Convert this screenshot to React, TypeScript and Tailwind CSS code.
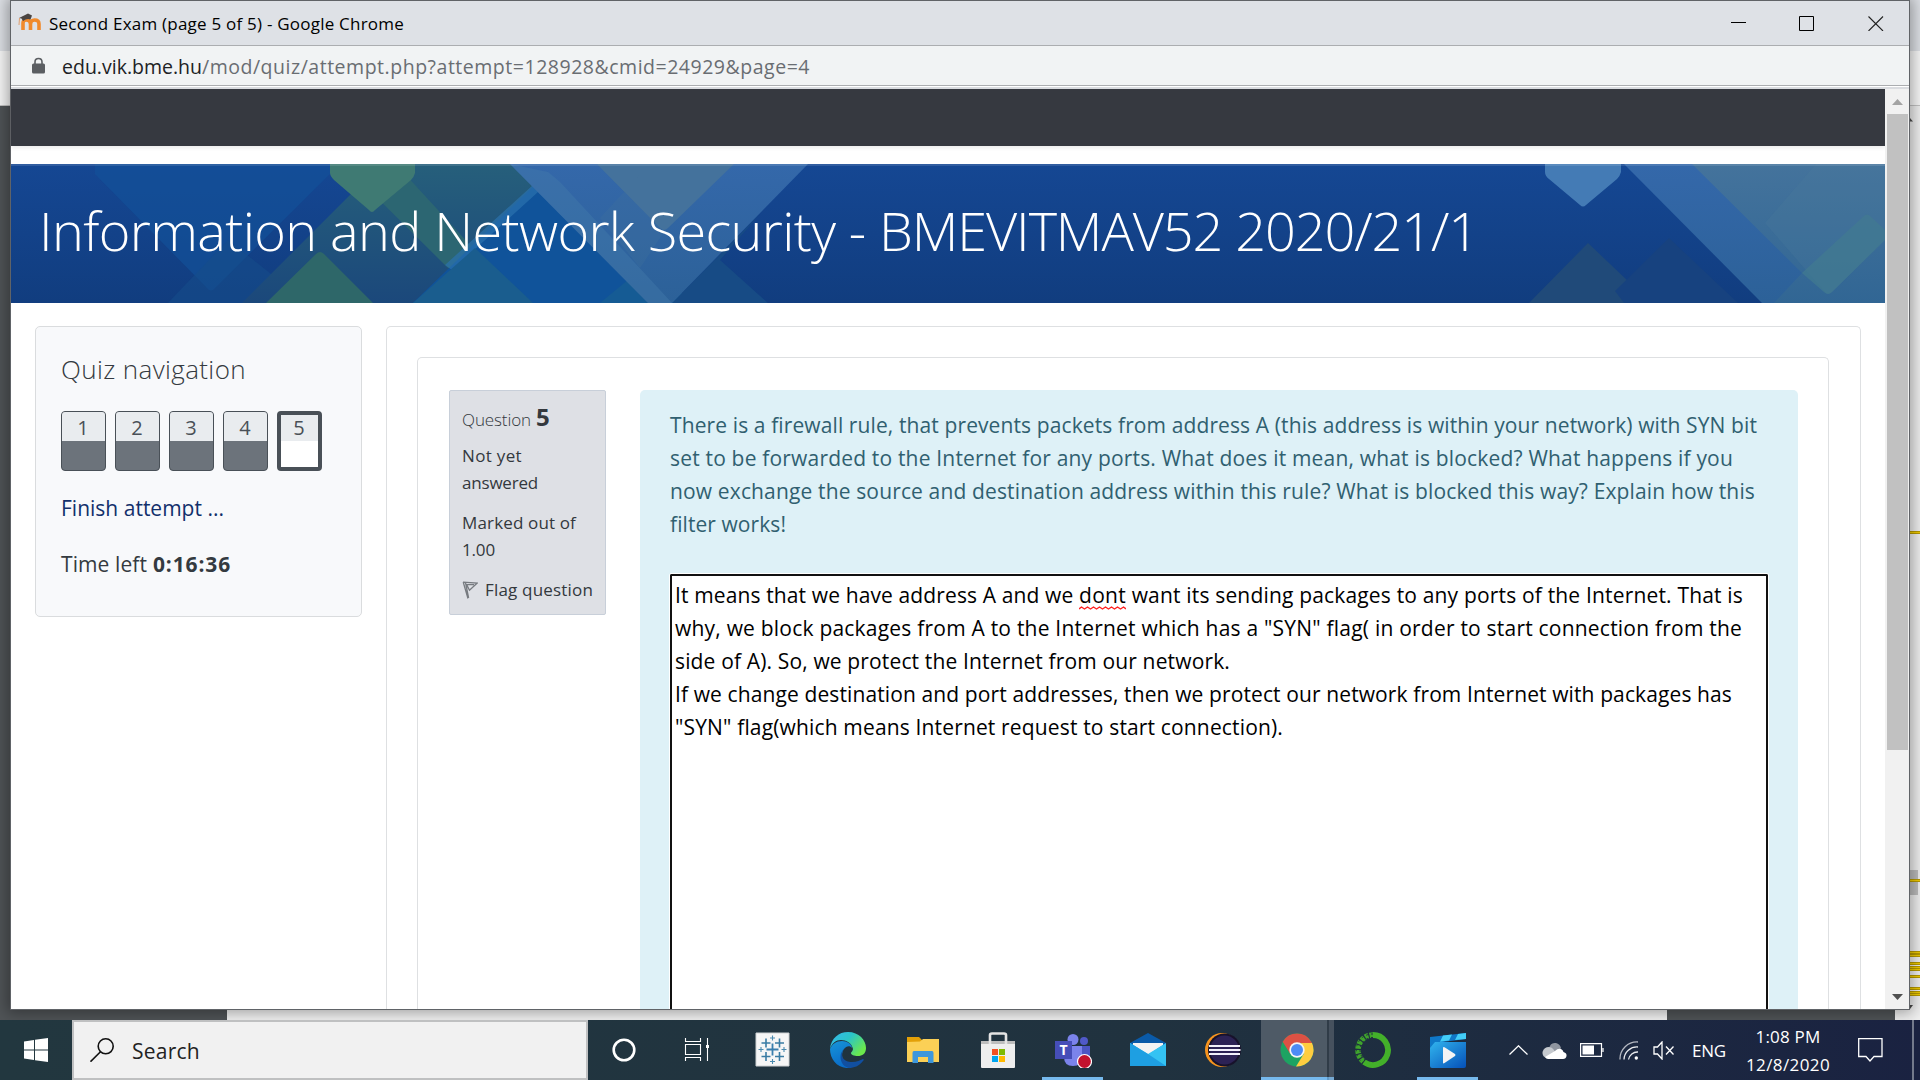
import { useLayoutEffect, useRef } from "react";
import type { ReactNode } from "react";

/** Single line of text whose tracking is adjusted so that it spans `w` pixels. */
function Fit({ w, className = "", children }: { w: number; className?: string; children: ReactNode }) {
  const ref = useRef<HTMLSpanElement>(null);
  useLayoutEffect(() => {
    const el = ref.current;
    if (!el) return;
    el.style.letterSpacing = "0px";
    const n = (el.textContent || "").length;
    el.style.letterSpacing = `${(w - el.getBoundingClientRect().width) / n}px`;
  }, [w]);
  return (
    <span ref={ref} className={`inline-block whitespace-nowrap ${className}`}>
      {children}
    </span>
  );
}

const questionLines: [string, number][] = [
  ["There is a firewall rule, that prevents packets from address A (this address is within your network) with SYN bit", 1087],
  ["set to be forwarded to the Internet for any ports. What does it mean, what is blocked? What happens if you", 1063],
  ["now exchange the source and destination address within this rule? What is blocked this way? Explain how this", 1085],
  ["filter works!", 116],
];

function Banner() {
  return (
    <div className="grid h-[139px] shrink-0 items-center">
      <svg className="col-start-1 row-start-1 h-[139px] w-[1874px]" viewBox="11 164 1874 139" preserveAspectRatio="none">
        <defs>
          <linearGradient id="base" x1="0" y1="0" x2="0" y2="1">
            <stop offset="0" stopColor="#154793" />
            <stop offset="1" stopColor="#113d7f" />
          </linearGradient>
          <linearGradient id="teal" x1="0" y1="0" x2="0" y2="1">
            <stop offset="0" stopColor="#265f7b" />
            <stop offset="1" stopColor="#1b487b" />
          </linearGradient>
          <linearGradient id="light" x1="0" y1="0" x2="0" y2="1">
            <stop offset="0" stopColor="#3468aa" />
            <stop offset="1" stopColor="#2c6198" />
          </linearGradient>
          <linearGradient id="slate" x1="0" y1="0" x2="0" y2="1">
            <stop offset="0" stopColor="#44739c" />
            <stop offset="1" stopColor="#316694" />
          </linearGradient>
        </defs>
        <rect x="11" y="164" width="1874" height="139" fill="url(#base)" />
        <path d="M95 164L95 174L207 288Q211 293 215 288L334 170V164Z" fill="#13529a" opacity=".65" />
        <path d="M168 303L228 240L308 303Z" fill="#164d8a" opacity=".6" />
        <path d="M242 303L352 193L380 164H530L548 172L430 303Z" fill="url(#teal)" />
        <path d="M266 303L316 254Q320 250 324 254L373 303Z" fill="#2e6769" />
        <path d="M343 164H398L404 173L471 246L453 267Q450 270 447 267Z" fill="#2c6672" />
        <path d="M330 164H415V173Q414 177 411 180L375 210Q372 214 369 210L334 180Q330 176 330 173Z" fill="#3f7a73" />
        <path d="M413 303L548 172L680 303Z" fill="#10539a" />
        <path d="M445 265L545 174L552 174L560 184L549 182L452 270Z" fill="#2b72ae" opacity=".7" />
        <path d="M413 303L475 248L533 303Z" fill="#1a5d8e" />
        <path d="M600 303L640 270L700 303Z" fill="#155b94" />
        <path d="M672 303L760 214L720 260L768 303Z" fill="#174b85" />
        <path d="M510 164H808L672 303H648Z" fill="url(#light)" />
        <path d="M548 172L560 182L672 303H648L510 164Z" fill="#4279aa" opacity=".45" />
        <path d="M597 164H734L668 228Q664 232 660 228Z" fill="#44729c" />
        <path d="M650 164L600 218L640 268L664 232L597 164Z" fill="#44729c" opacity=".25" />
        <path d="M1545 164H1621V172Q1620 176 1617 179L1586 205Q1583 208 1580 205L1549 179Q1545 176 1545 172Z" fill="#447bb5" />
        <path d="M1529 303L1588 243L1651 303Z" fill="#204a79" />
        <path d="M1615 291L1669 238L1738 303H1624Z" fill="#17427f" />
        <path d="M1624 164H1885V303H1762Z" fill="url(#light)" />
        <path d="M1692 164H1885V303H1774L1802 273Z" fill="url(#slate)" />
        <path d="M1816 164L1765 223L1825 292Q1828 296 1832 292L1885 240V164Z" fill="#4a7a9c" opacity=".25" />
        <path d="M1802 273L1864 216Q1867 213 1870 216L1885 230V240L1832 292Q1828 296 1824 292Z" fill="#427b90" opacity=".7" />
        <rect x="11" y="164" width="1874" height="2" fill="#ffffff" opacity=".12" />
      </svg>
      <h1 className="col-start-1 row-start-1 flex pb-[8px] pl-[28px] text-[54px] leading-[76px] font-light text-white">
        <Fit w={840}>Information and Network Security -&nbsp;</Fit>
        <Fit w={599}>BMEVITMAV52 2020/21/1</Fit>
      </h1>
    </div>
  );
}

function QuizNav() {
  return (
    <aside className="h-[291px] w-[327px] shrink-0 rounded-[5px] border border-[#dadcde] bg-[#f8f9fb] pt-6 pl-[25px] text-[21px] leading-[33px] text-[#343a40]">
      <h2 className="h-9 text-[26px] leading-9 font-light"><Fit w={185}>Quiz navigation</Fit></h2>
      <div className="mt-6 flex gap-[9px] text-xl text-[#495057]">
        {[1, 2, 3, 4].map((n) => (
          <div key={n} className="flex h-[60px] w-[45px] flex-col overflow-hidden rounded-[4px] border border-[#495057] bg-[#6c737b]">
            <span className="h-[29px] bg-[#e9ecef] pr-px text-center leading-[31px]">{n}</span>
          </div>
        ))}
        <div className="flex h-[60px] w-[45px] flex-col overflow-hidden rounded-[4px] border-4 border-[#495057] bg-white">
          <span className="h-[26px] bg-[#e9ecef] pr-px text-center leading-[25px]">5</span>
        </div>
      </div>
      <p className="mt-[21px] text-[#12306b]"><Fit w={163}>Finish attempt ...</Fit></p>
      <p className="mt-[23px] flex gap-[6px]">
        <Fit w={86}>Time left</Fit>
        <Fit w={78} className="font-bold">0:16:36</Fit>
      </p>
    </aside>
  );
}

function QuestionInfo() {
  return (
    <div className="h-[225px] w-[157px] shrink-0 rounded-[2px] border border-[#c8cfd9] bg-[#dee0e5] pt-3 pl-3 text-[17px] leading-[27px] text-[#33383d]">
      <div className="flex h-[27px] items-baseline gap-[5px]">
        <Fit w={69} className="font-light">Question</Fit>
        <span className="text-[24px] leading-[27px] font-bold">5</span>
      </div>
      <div className="mt-3 flex flex-col items-start"><Fit w={60}>Not yet</Fit><Fit w={76}>answered</Fit></div>
      <div className="mt-[13px] flex flex-col items-start"><Fit w={114}>Marked out of</Fit><Fit w={33}>1.00</Fit></div>
      <div className="mt-[13px] flex items-center gap-[7px]">
        <svg className="h-[18px] w-4" viewBox="0 0 16 18" fill="none" stroke="#777b80" strokeWidth="1.3">
          <path d="M1.2 1L6 17.5M3.4 1L6.6 17M1 1.2L15 2.2L7.5 9.2L4.6 3.6L12 3.6" />
        </svg>
        <Fit w={108}>Flag question</Fit>
      </div>
    </div>
  );
}

function Answer() {
  return (
    <div className="mt-[32px] ml-[-1px] flex grow rounded-t-[3px] border-x border-t border-white bg-white">
      <div className="flex grow flex-col items-start rounded-t-[2px] border-x-2 border-t-2 border-[#111111] pt-[3px] pl-[3px] text-black">
        <div className="flex">
          <Fit w={404}>It means that we have address A and we&nbsp;</Fit>
          <span className="relative">
            <Fit w={47}>dont</Fit>
            <svg className="absolute top-[27px] left-0 h-1 w-[47px]" viewBox="0 0 47 4" fill="none" stroke="#ff2020" strokeWidth="1.4">
              <path d="M0 3L2.5 1L5.5 3L8.5 1L11.5 3L14.5 1L17.5 3L20.5 1L23.5 3L26.5 1L29.5 3L32.5 1L35.5 3L38.5 1L41.5 3L44.5 1L47 3" />
            </svg>
          </span>
          <Fit w={617}>&nbsp;want its sending packages to any ports of the Internet. That is</Fit>
        </div>
        <Fit w={1067}>why, we block packages from A to the Internet which has a "SYN" flag( in order to start connection from the</Fit>
        <Fit w={555}>side of A). So, we protect the Internet from our network.</Fit>
        <Fit w={1057}>If we change destination and port addresses, then we protect our network from Internet with packages has</Fit>
        <Fit w={608}>"SYN" flag(which means Internet request to start connection).</Fit>
      </div>
    </div>
  );
}

function ScrollBar() {
  return (
    <div className="flex w-6 flex-col items-center bg-[#f1f1f1]">
      <svg className="h-[25px] w-6 shrink-0" viewBox="0 0 24 25"><path d="M7 16L12.5 10L18 16Z" fill="#a3a3a3" /></svg>
      <div className="h-[636px] w-[21px] shrink-0 bg-[#c1c1c1]" />
      <div className="grow" />
      <svg className="h-[22px] w-6 shrink-0" viewBox="0 0 24 22"><path d="M7 7L18 7L12.5 13Z" fill="#505050" /></svg>
    </div>
  );
}

function ExamWindow() {
  return (
    <section className="absolute top-0 left-[10px] flex h-[1010px] w-[1900px] flex-col border border-[#606367] bg-white shadow-[0_0_14px_3px_rgba(0,0,0,0.35)]">
      <header className="flex h-11 shrink-0 items-center bg-[#dee1e6] pl-[7px] text-black">
        <svg className="h-[22px] w-6" viewBox="0 0 24 22" fill="none">
          <path d="M5 18V11Q5 8 8.2 8Q12.5 8 12.5 12V18M12.5 12Q12.5 8 16.5 8Q21 8 21 12V18" stroke="#f08a2c" strokeWidth="3.6" />
          <path d="M1 6L10 1.5L14 3.5L12.5 7.5Q9 6 5 9L3.5 6.5Z" fill="#4a4542" />
          <path d="M1.5 6L1 13" stroke="#e0a070" />
        </svg>
        <Fit w={355} className="mt-[2px] ml-[7px] text-[17px]">Second Exam (page 5 of 5) - Google Chrome</Fit>
        <div className="ml-auto flex pr-[25px]">
          <svg className="mr-[52px] h-4 w-4" viewBox="0 0 16 16"><path d="M0 7.5H15" stroke="#000" /></svg>
          <svg className="mr-[53px] h-4 w-4" viewBox="0 0 16 16"><path d="M.5 1.5H14.5V15.5H.5Z" stroke="#000" fill="none" /></svg>
          <svg className="h-4 w-4" viewBox="0 0 16 16"><path d="M.5 1.5L15 16M15 1.5L.5 16" stroke="#222" strokeWidth="1.1" /></svg>
        </div>
      </header>
      <div className="flex h-[41px] shrink-0 items-center border-y border-[#abadb0] bg-[#f1f3f4] pl-[21px] text-[19.5px] text-[#696d72]">
        <svg className="h-[17px] w-[13px]" viewBox="0 0 13 17" fill="none">
          <path d="M3 8V5Q3 1.5 6.5 1.5Q10 1.5 10 5V8" stroke="#5b5e62" strokeWidth="1.6" />
          <rect y="6.5" width="13" height="10" rx="1.5" fill="#5b5e62" />
        </svg>
        <Fit w={140} className="mt-[2px] ml-[17px] text-[#202124]">edu.vik.bme.hu</Fit>
        <Fit w={608} className="mt-[2px]">/mod/quiz/attempt.php?attempt=128928&amp;cmid=24929&amp;page=4</Fit>
      </div>
      <div className="h-[3px] shrink-0 border-t border-white bg-[#dadce0]" />
      <div className="flex min-h-0 grow">
        <main className="flex w-[1874px] flex-col">
          <div className="h-[57px] shrink-0 bg-[#363940] shadow-[0_2px_4px_rgba(0,0,0,0.08)]" />
          <div className="h-[18px] shrink-0" />
          <Banner />
          <div className="flex min-h-0 grow gap-6 overflow-hidden pt-[23px] pl-6">
            <QuizNav />
            <div className="flex w-[1475px] rounded-t-[5px] border-x border-t border-[#dee0e2] px-[30px] pt-[30px]">
              <div className="flex w-[1412px] gap-[34px] rounded-t-[5px] border-x border-t border-[#dee0e2] pt-8 pl-[31px]">
                <QuestionInfo />
                <article className="flex w-[1158px] flex-col rounded-t-[5px] bg-[#def1f7] pt-[19px] pr-[29px] pl-[30px] text-[21px] leading-[33px] text-[#306070]">
                  <div className="flex flex-col items-start">
                    {questionLines.map(([text, w]) => (
                      <Fit key={text} w={w}>{text}</Fit>
                    ))}
                  </div>
                  <Answer />
                </article>
              </div>
            </div>
          </div>
        </main>
        <ScrollBar />
      </div>
    </section>
  );
}

const marks = [532, 880, 952, 955, 963, 967, 969, 976, 988, 992, 994];

function BackgroundWindow() {
  return (
    <div className="absolute inset-x-0 top-0 flex h-[1020px] flex-col">
      <div className="h-[51px] shrink-0 bg-[#dee1e6]" />
      <div className="h-[54px] shrink-0 bg-[#f8f8f8]" />
      <div className="flex grow border-t border-[#c4c4c4]">
        <div className="w-[227px] bg-[#505457]" />
        <div className="w-[1440px] bg-[#f3f3f3]" />
        <div className="w-[228px] bg-[#505457]" />
        <div className="grow bg-[#f0f0f0]" />
      </div>
      <div className="absolute top-[870px] left-[1909px] h-[25px] w-[9px] bg-[#bdbdbd]" />
      {marks.map((y) => (
        <div key={y} className="absolute left-[1909px] h-[3px] w-[11px] border-y border-[#b89a00] bg-[#f2cd00]" style={{ top: y - 1 }} />
      ))}
    </div>
  );
}

function Edges() {
  return (
    <svg className="absolute top-[105px] left-[1910px] h-[915px] w-[10px]" viewBox="0 0 10 915" fill="#3c3c3c">
      <path d="M0 13L3 16.500H0ZM0 900H3L0 904Z" />
    </svg>
  );
}

function TaskIcon({ name }: { name: string }) {
  const c = "h-9 w-9";
  switch (name) {
    case "cortana":
      return <svg className={c} viewBox="0 0 36 36"><circle cx="18" cy="18" r="10.3" fill="none" stroke="#fff" strokeWidth="2.6" /></svg>;
    case "taskview":
      return (
        <svg className={c} viewBox="0 0 36 36" fill="none" stroke="#fff" strokeWidth="1.1">
          <path d="M5.500 6V9.500H20.500V6M5.500 29V25.500H20.500V29M5.500 12.500H20.500V22.500H5.500ZM27.500 6V29" />
          <path d="M26 13H29V16H26Z" fill="#fff" stroke="none" />
        </svg>
      );
    case "tableau":
      return (
        <svg className={c} viewBox="0 0 36 36" fill="none">
          <path d="M1 1H34V34H1Z" fill="#f6f6f6" stroke="#cfd2d4" />
          <path d="M17.5 11.5V23.5M11.5 17.5H23.5" stroke="#3b7fae" strokeWidth="1.8" />
          <path d="M11 6.5V15.5M6.500 11H15.500M24.500 6.500V15.500M20 11H29M11 20V29M6.500 24.500H15.500M24.500 20V29M20 24.500H29" stroke="#3a7ca4" strokeWidth="1.6" />
          <path d="M17.500 3.500V8.500M15 6H20M17.500 27V32M15 29.500H20M6 15V20M3.500 17.500H8.500M29 15V20M26.500 17.500H31.500" stroke="#4a8aaf" strokeWidth="1.1" />
        </svg>
      );
    case "edge":
      return (
        <svg className={c} viewBox="0 0 36 36">
          <defs>
            <linearGradient id="eg" x1="0" y1="0" x2="1" y2=".6"><stop stopColor="#35b8f0" /><stop offset=".5" stopColor="#2bc4c8" /><stop offset="1" stopColor="#6be84c" /></linearGradient>
            <linearGradient id="eb" x1="0" y1="0" x2=".4" y2="1"><stop stopColor="#1795d8" /><stop offset="1" stopColor="#0a6cc8" /></linearGradient>
          </defs>
          <path d="M0 17C1 6 9 0 18 0C29 0 36 8 36 16C36 22 32 24 28 24C24 24 21 23 21 21C21 20 23 19 23 17C22 11 16 8 11 8C6 8 2 11 0 17Z" fill="url(#eg)" />
          <path d="M0 17C2 12 6 9 12 9C17 9 22 12 22 16C20 13 16 14 14 17C11 21 11 29 18 33L20 36C8 37 0 28 0 17Z" fill="url(#eb)" />
          <path d="M14 17C9 24 14 30 22 30C27 30 30 28 33 27C34 27 34 28 33 29C29 34 24 36 19 36C10 34 8 22 14 17Z" fill="#114fa0" />
        </svg>
      );
    case "folder":
      return (
        <svg className={c} viewBox="0 0 36 36">
          <path d="M2 5H14L17 8V12H2Z" fill="#e3a008" />
          <path d="M2 10L15 9.500L18 7H34V30H2Z" fill="#fbd056" />
          <path d="M9 19H27Q28.500 19 28.500 21V31H23V25H13V31H7.500V21Q7.500 19 9 19Z" fill="#3d97dc" />
        </svg>
      );
    case "store":
      return (
        <svg className={c} viewBox="0 0 36 36">
          <path d="M1 9H35V35Q35 36 34 36H2Q1 36 1 35Z" fill="#eeeeee" />
          <path d="M1 9H35V12H1Z" fill="#bdbdbd" />
          <path d="M10 12V3Q10 1.500 12 1.500H24Q26 1.500 26 3V12" fill="none" stroke="#e4e4e4" strokeWidth="2.600" />
          <path d="M12 17H18V23H12Z" fill="#f25022" /><path d="M19 17H25V23H19Z" fill="#7fba00" />
          <path d="M12 24H18V30H12Z" fill="#00a4ef" /><path d="M19 24H25V30H19Z" fill="#ffb900" />
        </svg>
      );
    case "teams":
      return (
        <svg className="h-9 w-[38px]" viewBox="0 0 38 36">
          <circle cx="30" cy="9" r="4" fill="#5059c9" /><circle cx="19" cy="7.500" r="5.500" fill="#7b83eb" />
          <path d="M24 14H36V24Q36 30 30 30H24Z" fill="#4c55c4" />
          <path d="M10 14H28V25Q28 34 19 34Q10 34 10 25Z" fill="#7b83eb" />
          <path d="M1 9H18V27H1Z" fill="#464eb8" />
          <text x="9.500" y="23" textAnchor="middle" fill="#fff" fontSize="14" fontWeight="bold">T</text>
          <circle cx="30.500" cy="29.500" r="7" fill="#c4122e" stroke="#fff" strokeWidth="1.200" />
        </svg>
      );
    case "mail":
      return (
        <svg className={c} viewBox="0 0 36 36">
          <path d="M0 11L18 1L36 11V16H0Z" fill="#0a5aa8" />
          <path d="M3 11H33V13L18 23L3 13Z" fill="#f3f3f3" />
          <path d="M0 11V34H36V11L18 22Z" fill="#34c3f3" /><path d="M0 11V34H36L18 22Z" fill="#1e9fe2" />
        </svg>
      );
    case "eclipse":
      return (
        <svg className={c} viewBox="0 0 36 36">
          <circle cx="17" cy="18" r="17" fill="#f7941e" /><circle cx="19.500" cy="18" r="16.500" fill="#17122b" /><circle cx="19.500" cy="18" r="14.500" fill="#2c2255" />
          <path d="M4 14H35M4 18H35.500M4 22H35" stroke="#f2f0fa" strokeWidth="2" />
        </svg>
      );
    case "chrome":
      return (
        <svg className={c} viewBox="0 0 36 36">
          <circle cx="18" cy="18" r="16.500" fill="#1da362" />
          <path d="M3.700 9.700A16.500 16.500 0 0 1 32.300 9.800L33 11H18L11 21.500Z" fill="#dd5144" />
          <path d="M33 11A16.500 16.500 0 0 1 17 34.500L25 21.500L22 11Z" fill="#ffcd40" />
          <circle cx="18" cy="18" r="7.700" fill="#f4f4f4" /><circle cx="18" cy="18" r="6" fill="#4c8bf5" />
        </svg>
      );
    case "anaconda":
      return (
        <svg className={c} viewBox="0 0 36 36" fill="none" stroke="#43b02a">
          <path d="M18 3A15 15 0 1 1 9 30" strokeWidth="5.800" />
          <path d="M18 3A15 15 0 0 0 9 30" strokeWidth="5.500" strokeDasharray="3.500 1.200" opacity=".9" />
          <path d="M18 2A16 16 0 0 0 8 31" strokeWidth="1" stroke="#22363f" strokeDasharray="2 3" />
          <path d="M18 5.500A12.500 12.500 0 0 0 10 28" strokeWidth="1" stroke="#22363f" strokeDasharray="2 3" />
        </svg>
      );
    default:
      return (
        <svg className={c} viewBox="0 0 36 36">
          <defs><linearGradient id="mv" x1="0" y1="0" x2="1" y2="1"><stop stopColor="#31b4ee" /><stop offset="1" stopColor="#0550b8" /></linearGradient></defs>
          <path d="M0 5L36 1V7L5 11V16H0Z" fill="#0f78c8" /><path d="M13 3.500L22 2.500L19 8.500L10 9.700ZM28 1.900L36 1V7L25 8Z" fill="#43cdf7" />
          <path d="M5 10H36V34Q36 36 34 36H2Q0 36 0 34V16Z" fill="url(#mv)" />
          <path d="M13 16Q13 14.500 14.500 15.300L25 22Q26 23 25 24L14.500 31Q13 32 13 30.500Z" fill="#f4f4f4" />
        </svg>
      );
  }
}

const apps = ["cortana", "taskview", "tableau", "edge", "folder", "store", "teams", "mail", "eclipse", "chrome", "anaconda", "movies"];
const running = ["teams", "movies"];

function Taskbar() {
  return (
    <footer className="absolute inset-x-0 bottom-0 flex h-[60px] bg-linear-to-r from-[#22373f] via-[#20323f] via-60% to-[#1a2241] text-white">
      <div className="flex w-[72px] items-center justify-center">
        <svg className="h-6 w-6" viewBox="0 0 24 24" fill="#fff"><path d="M0 3.500L10 2V11.500H0ZM11 1.800L24 0V11.500H11ZM0 12.500H10V22L0 20.500ZM11 12.500H24V24L11 22.200Z" /></svg>
      </div>
      <div className="flex w-[516px] items-center border-2 border-[#bfc0c1] bg-[#f1f1f1] pl-4 text-[21px] text-[#222]">
        <svg className="h-6 w-6" viewBox="0 0 24 24" fill="none" stroke="#111" strokeWidth="1.600"><circle cx="15.700" cy="8.300" r="7.500" /><path d="M10.500 13.700L.5 23.700" /></svg>
        <Fit w={68} className="mt-1 ml-[18px]">Search</Fit>
      </div>
      <nav className="flex">
        {apps.map((a) => (
          <div key={a} className={`flex h-[60px] items-center justify-center ${a === "cortana" ? "w-[72px]" : "w-[75px]"}`}>
            {a === "chrome" ? (
              <div className="flex h-[60px] items-stretch">
                <div className="flex w-[66px] items-center justify-center border-b-[3px] border-[#76b9ed] bg-[#4e5a66] pt-[3px] pl-[5px]"><TaskIcon name={a} /></div>
                <div className="w-[2px] border-b-[3px] border-[#5f98c6] bg-[#303c48]" />
                <div className="w-[5px] border-b-[3px] border-[#76a9d3] bg-[#46515e]" />
              </div>
            ) : running.includes(a) ? (
              <div className="flex h-[60px] w-[61px] items-center justify-center border-b-[3px] border-[#76b9ed] pt-[3px]"><TaskIcon name={a} /></div>
            ) : (
              <TaskIcon name={a} />
            )}
          </div>
        ))}
      </nav>
      <div className="ml-auto flex items-center text-[17px] leading-7">
        <svg className="h-[10px] w-[19px]" viewBox="0 0 19 10" fill="none" stroke="#fff" strokeWidth="1.300"><path d="M.5 9.500L9.500 .8L18.500 9.500" /></svg>
        <svg className="ml-[14px] h-[17px] w-[25px]" viewBox="0 0 25 17">
          <path d="M7 7Q8 0 14 1Q18 2 19 6L14 13H5Z" fill="#8f959f" /><path d="M5 16Q0 15 .5 10Q2 5 7 5Q10 5 12 8L16 16Z" fill="#c5c9ce" />
          <path d="M3 15L13 9Q16 6 19 7Q21 8 21.500 10Q25 11 24.500 14Q24 17 21 17H6Q4 17 3 15Z" fill="#fff" />
        </svg>
        <svg className="ml-[13px] h-[14px] w-[24px]" viewBox="0 0 24 14" fill="none" stroke="#fff" strokeWidth="1.200"><path d="M.6 .6H21.500V13.400H.6ZM23 5V9" /><path d="M2.500 2.500H14V11.500H2.500Z" fill="#fff" stroke="none" /></svg>
        <svg className="ml-[15px] h-[19px] w-[20px]" viewBox="0 0 20 19" fill="none" stroke="#e8eaee" strokeWidth="1.300">
          <path d="M1 18.500A17 17 0 0 1 19 1" opacity=".75" /><path d="M5 18.500A13 13 0 0 1 19 6" /><path d="M9.500 18.500A9 9 0 0 1 19 11" /><circle cx="17.300" cy="17" r="1.700" fill="#fff" stroke="none" />
        </svg>
        <svg className="ml-[14px] h-[19px] w-[21px]" viewBox="0 0 21 19" fill="none" stroke="#fff" strokeWidth="1.300"><path d="M1 6H4.500L9 1V18L4.500 13H1ZM13 5.500L20.500 13.500M20.500 5.500L13 13.500" /></svg>
        <Fit w={34} className="mt-[2px] ml-[18px]">ENG</Fit>
        <div className="mt-[1px] ml-[20px] flex w-[84px] flex-col items-center"><Fit w={65}>1:08 PM</Fit><Fit w={84}>12/8/2020</Fit></div>
        <svg className="ml-[28px] h-6 w-[25px]" viewBox="0 0 25 24" fill="none" stroke="#fff" strokeWidth="1.300"><path d="M.7 .7H24V18.500H16L12 23L8 18.500H.7Z" /></svg>
        <div className="ml-[29px] h-[60px] w-2 border-l-2 border-[#737a8c]" />
      </div>
    </footer>
  );
}

export default function App() {
  return (
    <div className="relative h-[1080px] w-[1920px] overflow-hidden font-['Open_Sans','Noto_Sans',sans-serif]">
      <BackgroundWindow />
      <ExamWindow />
      <Edges />
      <Taskbar />
    </div>
  );
}
